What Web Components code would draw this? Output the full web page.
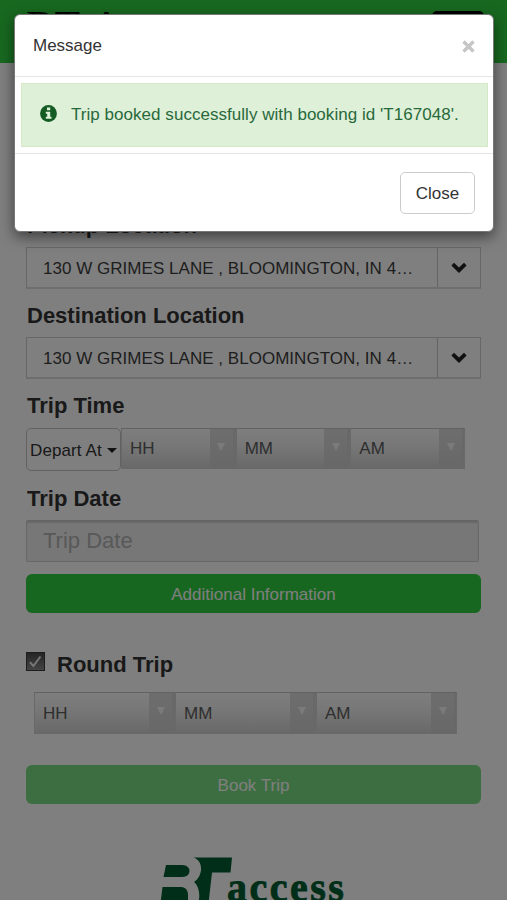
<!DOCTYPE html>
<html lang="en">
<head>
<meta charset="utf-8">
<title>BT Access</title>
<style>
html,body{margin:0;height:900px;overflow:hidden;background:#fff}
body{font:17px/24px "Liberation Sans",Arial,sans-serif;color:#333}
</style>
</head>
<body>
<bt-app></bt-app>
<script>
const define = (name, html) => {
  const t = document.createElement('template');
  t.innerHTML = html;
  customElements.define(name, class extends HTMLElement {
    constructor() {
      super();
      this.attachShadow({mode: 'open'}).append(t.content.cloneNode(true));
    }
  });
};

define('bt-header', `<style>
:host{display:flex;justify-content:space-between;align-items:flex-start;height:63px;box-sizing:border-box;background:#30d040;padding:0 23px 0 26px;color:#000}
.brand{font:42px/48px "Liberation Serif",serif;margin-top:2px;letter-spacing:.5px;word-spacing:3px}
.menu{width:52px;height:40px;margin-top:11px;border-radius:5px;background:#000}
</style><div class="brand"><slot></slot></div><div class="menu"></div>`);

define('bt-label', `<style>
:host{display:block;font-weight:bold;font-size:22px;line-height:34px;height:32px;margin:10px 0 6px 1px;color:#333}
</style><slot></slot>`);

define('bt-combo', `<style>
:host{display:flex;height:42px;box-sizing:border-box;border:solid;border-width:1px 1px 2px;border-color:#cfcfcf #cfcfcf #dcdcdc;}
.v{flex:1;min-width:0;padding-left:16px;line-height:42px;height:39px;white-space:nowrap;color:#3c3c3c;letter-spacing:.03px}
.d{width:42px;border-left:1px solid #c8c8c8;display:flex;align-items:center;justify-content:center}
</style><div class="v"><slot></slot></div><div class="d"><svg width="16" height="12" viewBox="0 0 16 12"><path d="M3 .8 8 5.6 13 .8 15.6 3.5 8 11 .4 3.5Z" fill="#222"/></svg></div>`);

define('bt-select', `<style>
:host{display:flex;flex:1;box-sizing:border-box;border:solid #d2d2d2;border-width:1px 1px 1px;border-top-color:#c4c4c4;background:linear-gradient(#fcfcfc,#f0f0f0 40%,#d2d2d2)}
.v{flex:1;padding-left:8px;line-height:var(--line,40px);color:#5c5c5c}
.a{width:25px;box-sizing:border-box;border-right:2px solid #d0d0d0;background:linear-gradient(#dcdcdc,#d0d0d0);text-align:center;line-height:0;padding-top:14px}
</style><div class="v"><slot></slot></div><div class="a"><svg width="8" height="8"><path d="M0 0h8L4 8z" fill="#f6f6f6"/></svg></div>`);

define('bt-dropdown', `<style>
:host{display:flex;align-items:center;box-sizing:border-box;width:95px;height:43px;border:1px solid #c4c4c4;border-radius:5px;padding:2px 0 0 3px;gap:5px;white-space:nowrap;color:#333;letter-spacing:.1px}
i{border:5px solid transparent;border-top-color:#222;border-bottom:0}
</style><span><slot></slot></span><i></i>`);

define('bt-date', `<style>
:host{display:block;width:453px;height:42px;box-sizing:border-box;border:1px solid #d0d0d0;border-top-color:#c6c6c6;box-shadow:inset 0 2px 1px #d2d2d2;border-radius:2px;background:#eee;color:#b2b2b2;font-size:22px;line-height:40px;padding-left:16px}
</style><slot></slot>`);

define('bt-action', `<style>
:host{display:block;height:39px;line-height:41px;text-align:center;border-radius:6px;background:#30ce40;color:#fff}
:host([muted]){background:#78dc82}
</style><slot></slot>`);

define('bt-check', `<style>
:host{display:flex;gap:12px;height:32px;font-weight:bold;font-size:22px;line-height:34px;color:#333}
svg{margin-top:4px;flex:none}
</style><svg width="19" height="19"><defs><linearGradient id="g" x2="0" y2="1"><stop stop-color="#484848"/><stop offset="1" stop-color="#8c8c8c"/></linearGradient></defs><rect x=".5" y=".5" width="18" height="18" fill="url(#g)" stroke="#3a3a3a"/><path d="M4 10.3 7.4 14 14.5 4.5" fill="none" stroke="#eee" stroke-width="2"/></svg><slot></slot>`);

define('bt-logo', `<style>
:host{display:flex;align-items:flex-start;width:200px;height:43px;color:#005c30}
svg{flex:none}
span{font:bold 40px/43px "Liberation Serif",serif;letter-spacing:2.500px;margin:9px 0 0 -7px;-webkit-text-stroke:.8px #005c30}
</style><svg width="74" height="60" viewBox="160 857 74 60"><g fill="#005c30"><path d="M166 865H182C187 865 189.500 868 189.500 871S187 877 182 877H163.500Z"/><path d="M162.500 887H181C186 887 188 891 188 895V903H160.500Z"/><path d="M193.500 857.600H232L230.500 872.500H212L208 908H195C202 900 199.500 886 194 882C203 876 204 861 193.500 857.600Z"/></g></svg><span><slot></slot></span>`);

define('bt-modal', `<style>
:host{position:absolute;left:14px;top:14px;width:480px;height:218px;box-sizing:border-box;background:#fff;border:1px solid #777;border-radius:6px;box-shadow:0 5px 14px rgba(0,0,0,.5);display:flex;flex-direction:column}
header{height:62px;box-sizing:border-box;border-bottom:1px solid #e5e5e5;display:flex;justify-content:space-between;align-items:center;padding:1px 18px 0 18px}
.alert{margin:6px 5px 6px 6px;height:64px;box-sizing:border-box;border:1px solid #d6e9c6;background:#dff0d8;color:#28693c;display:flex;align-items:center;padding-left:18px;gap:14px}
.alert svg{margin-top:-3px;flex:none}
.alert span{letter-spacing:.04px}
footer{flex:1;border-top:1px solid #e5e5e5;display:flex;justify-content:flex-end;align-items:flex-start;padding:18px 18px 0}
button{font:inherit;color:#333;background:#fff;border:1px solid #ccc;border-radius:5px;width:75px;height:42px;padding:1px 0 0}
</style>
<header><slot name="title"></slot><svg width="13" height="13"><path d="M1.500 1.500 11.500 11.500M11.500 1.500 1.500 11.500" stroke="#c6c6c6" stroke-width="3.400"/></svg></header>
<div class="alert"><svg width="17" height="17"><circle cx="8.500" cy="8.500" r="8.400" fill="#145c23"/><path d="M7 2.500h3.200v2.700H7zM5.800 6.700h4.400v5.100h1.300v2H5.800v-2h1.400V8.700H5.800z" fill="#dff0d8"/></svg><span><slot></slot></span></div>
<footer><button>Close</button></footer>`);

define('bt-app', `<style>
:host{display:block;position:relative;width:507px;height:900px;overflow:hidden;background:#fff}
main{padding:136px 26px 0}
.time{display:flex;align-items:flex-start;margin-top:7px;height:44px}
.group{display:flex;height:41px;width:344px}
.return{display:flex;height:42px;width:423px;margin:12px 0 31px 8px;--line:41px}
.backdrop{position:absolute;inset:0;background:rgba(0,0,0,.5)}
</style>
<bt-header>BT Access</bt-header>
<main>
<bt-label>Pickup Location</bt-label>
<bt-combo>130 W GRIMES LANE , BLOOMINGTON, IN 4…</bt-combo>
<bt-label>Destination Location</bt-label>
<bt-combo>130 W GRIMES LANE , BLOOMINGTON, IN 4…</bt-combo>
<bt-label>Trip Time</bt-label>
<div class="time"><bt-dropdown>Depart At</bt-dropdown><div class="group"><bt-select>HH</bt-select><bt-select>MM</bt-select><bt-select>AM</bt-select></div></div>
<bt-label>Trip Date</bt-label>
<bt-date>Trip Date</bt-date>
<bt-action style="margin:12px 0 35px">Additional Information</bt-action>
<bt-check>Round Trip</bt-check>
<div class="return"><bt-select>HH</bt-select><bt-select>MM</bt-select><bt-select>AM</bt-select></div>
<bt-action muted>Book Trip</bt-action>
<bt-logo style="margin:53px 0 0 134px">access</bt-logo>
</main>
<div class="backdrop"></div>
<bt-modal><span slot="title">Message</span>Trip booked successfully with booking id 'T167048'.</bt-modal>`);
</script>
</body>
</html>
